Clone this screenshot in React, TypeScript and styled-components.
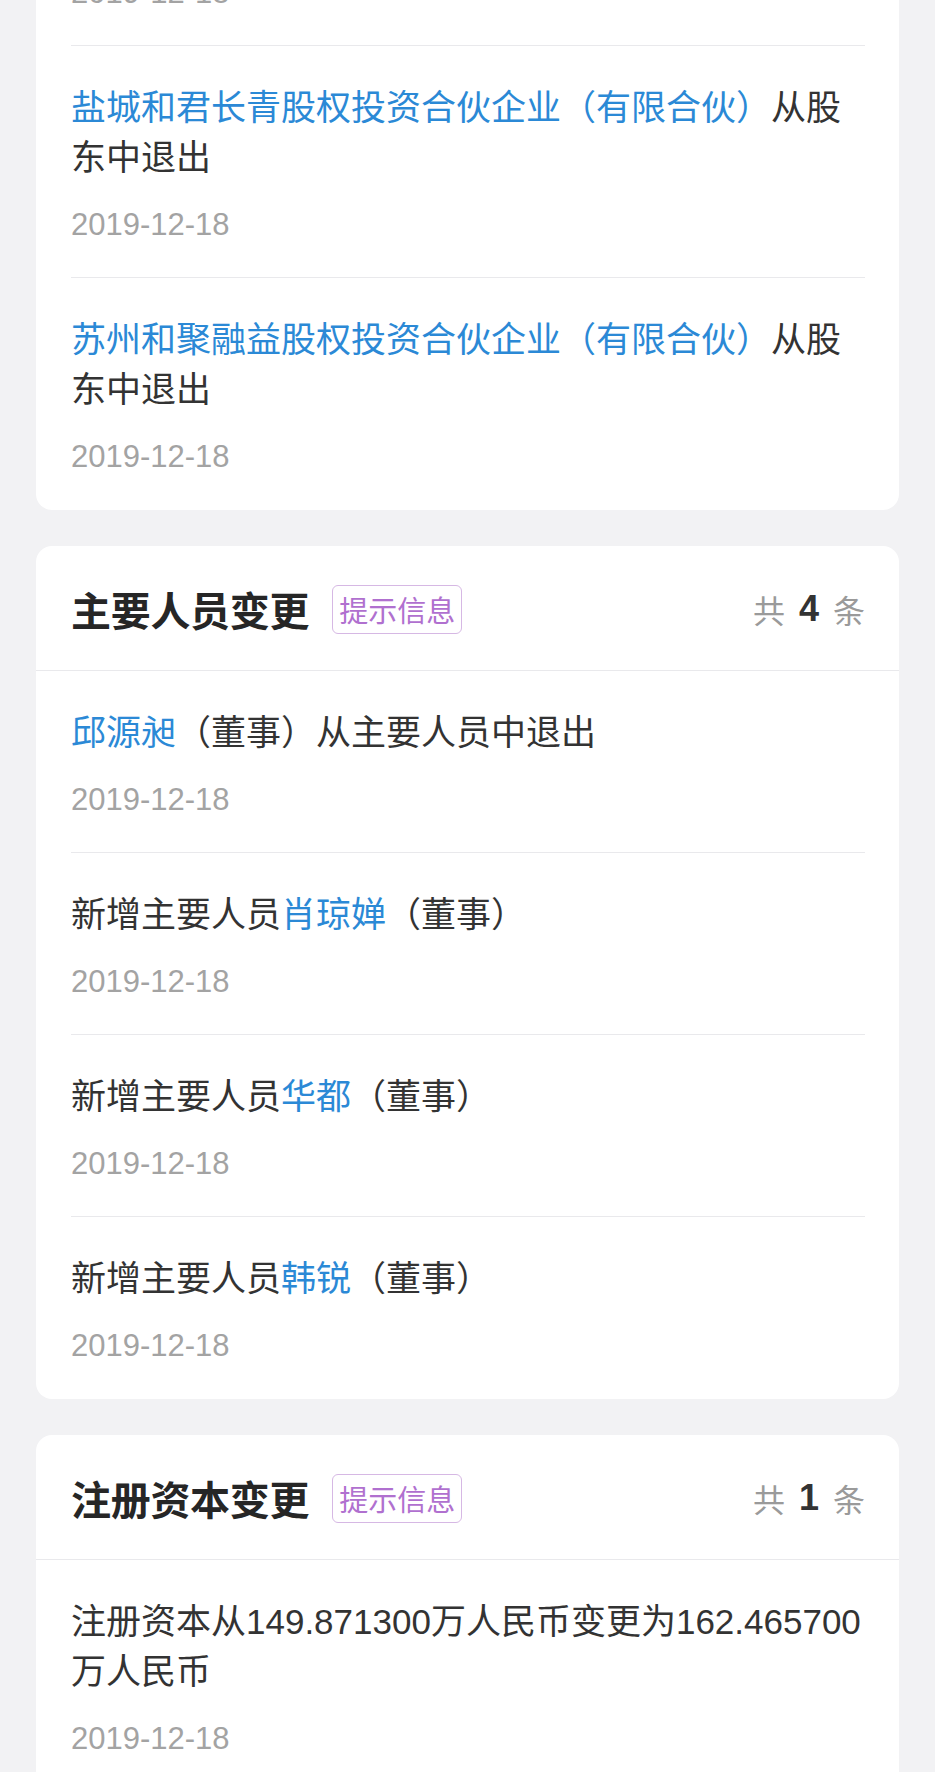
import React from "react";
import styled, { createGlobalStyle } from "styled-components";

const GlobalStyle = createGlobalStyle`
  html, body {
    margin: 0;
    padding: 0;
    background: #f2f2f4;
    font-family: "Liberation Sans", "Noto Sans CJK SC", sans-serif;
    -webkit-font-smoothing: antialiased;
  }
`;

const Page = styled.div`
  display: flex;
  flex-direction: column;
  gap: 36px;
  padding: 0 36px 40px;
  margin-top: -27px;
`;

const Card = styled.section`
  background: #ffffff;
  border-radius: 16px;
  overflow: hidden;
`;

const Header = styled.header`
  display: flex;
  align-items: center;
  height: 125px;
  padding: 2px 34px 0 35px;
  box-sizing: border-box;
  border-bottom: 1px solid #e9e9ec;
`;

const Title = styled.h2`
  margin: 0;
  font-size: 40px;
  font-weight: 700;
  color: #262626;
  letter-spacing: -0.3px;
`;

const Tag = styled.span`
  margin-left: 23px;
  height: 49px;
  box-sizing: border-box;
  padding: 0 6px;
  display: inline-flex;
  align-items: center;
  font-size: 29px;
  color: #b070cf;
  border: 1px solid #d6b8e4;
  border-radius: 6px;
`;

const Count = styled.div`
  margin-left: auto;
  display: flex;
  align-items: center;
  font-size: 32px;
  color: #9a9a9a;
`;

const CountNum = styled.span`
  margin: 0 14px;
  font-size: 36px;
  font-weight: 700;
  color: #333333;
`;

const List = styled.div`
  padding: 0 34px 1px 35px;
`;

const Item = styled.div`
  padding: 37px 0 32px;
  & + & {
    border-top: 1px solid #e9e9ec;
  }
`;

const Tail = styled.div`
  padding: 0 0 32px;
  & + ${Item} {
    border-top: 1px solid #e9e9ec;
  }
`;

const ItemText = styled.p`
  margin: 0 0 22px;
  font-size: 35px;
  line-height: 50px;
  color: #333333;
`;

const Link = styled.span`
  color: #2b89d6;
`;

const DateText = styled.div`
  font-size: 31px;
  line-height: 40px;
  color: #a3a3a3;
`;

type Entry = { text: React.ReactNode };

const shareholderExits: Entry[] = [
  {
    text: (
      <>
        <Link>盐城和君长青股权投资合伙企业（有限合伙）</Link>从股东中退出
      </>
    ),
  },
  {
    text: (
      <>
        <Link>苏州和聚融益股权投资合伙企业（有限合伙）</Link>从股东中退出
      </>
    ),
  },
];

const personnel: Entry[] = [
  {
    text: (
      <>
        <Link>邱源昶</Link>（董事）从主要人员中退出
      </>
    ),
  },
  {
    text: (
      <>
        新增主要人员<Link>肖琼婵</Link>（董事）
      </>
    ),
  },
  {
    text: (
      <>
        新增主要人员<Link>华都</Link>（董事）
      </>
    ),
  },
  {
    text: (
      <>
        新增主要人员<Link>韩锐</Link>（董事）
      </>
    ),
  },
];

const capital: Entry[] = [
  { text: <>注册资本从149.871300万人民币变更为162.465700万人民币</> },
];

const DATE = "2019-12-18";

const SectionHeader: React.FC<{ title: string; count: number }> = ({ title, count }) => (
  <Header>
    <Title>{title}</Title>
    <Tag>提示信息</Tag>
    <Count>
      共<CountNum>{count}</CountNum>条
    </Count>
  </Header>
);

const Entries: React.FC<{ entries: Entry[]; tail?: boolean }> = ({ entries, tail }) => (
  <List>
    {tail && (
      <Tail>
        <DateText>{DATE}</DateText>
      </Tail>
    )}
    {entries.map((e, i) => (
      <Item key={i}>
        <ItemText>{e.text}</ItemText>
        <DateText>{DATE}</DateText>
      </Item>
    ))}
  </List>
);

export default function App() {
  return (
    <>
      <GlobalStyle />
      <Page>
        <Card>
          <Entries entries={shareholderExits} tail />
        </Card>
        <Card>
          <SectionHeader title="主要人员变更" count={4} />
          <Entries entries={personnel} />
        </Card>
        <Card>
          <SectionHeader title="注册资本变更" count={1} />
          <Entries entries={capital} />
        </Card>
      </Page>
    </>
  );
}
